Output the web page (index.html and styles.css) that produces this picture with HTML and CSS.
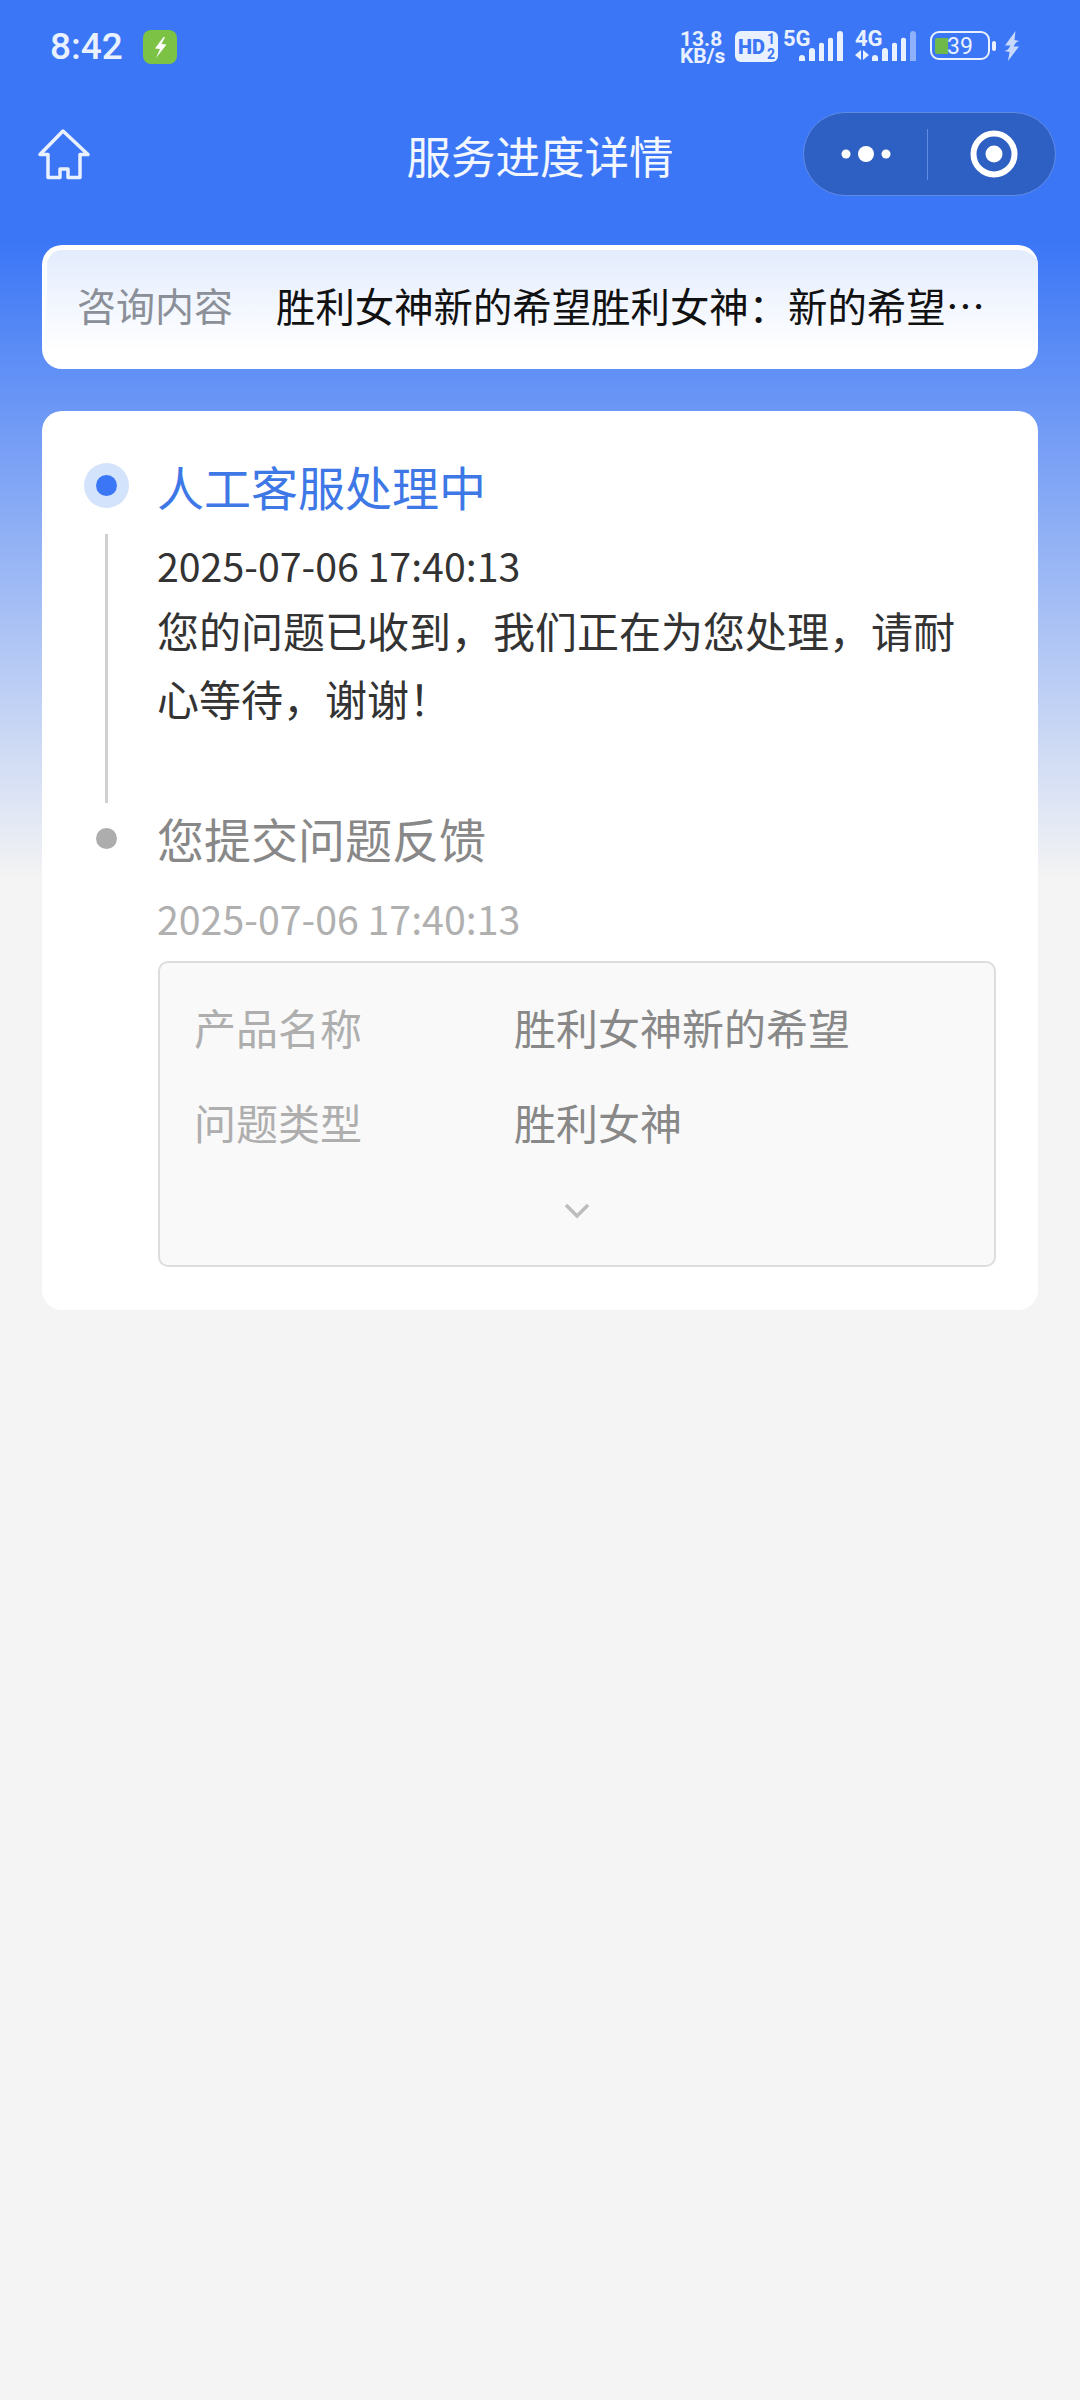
FILE: index.html
```html
<!DOCTYPE html>
<html lang="zh-CN">
<head>
    <meta charset="UTF-8">
    <meta name="viewport" content="width=device-width, initial-scale=1.0">
    <title>服务进度详情</title>
    <link rel="stylesheet" href="styles.css">
</head>
<body>
    <div class="status-bar">
        <div class="status-left">
            <span class="clock">8:42</span>
            <span class="app-badge">
                <svg width="34" height="34" viewBox="0 0 34 34"><path d="M20.500 7L12 18.500l5 .5-4 9 10.500-13.500-5-.5 3.500-7z" fill="#fff"/></svg>
            </span>
        </div>
        <div class="status-right">
            <div class="speed"><div>13.8</div><div>KB/s</div></div>
            <div class="hd">
                <span class="hd-text">HD</span>
                <div class="hd-nums"><div>1</div><div>2</div></div>
            </div>
            <div class="net net-5g">
                <span class="net-text">5G</span>
                <svg width="60" height="31" viewBox="0 0 60 31">
                    <path d="M16 27a3 3 0 0 1 6 0v3h-6zM26 20a3 3 0 0 1 6 0v10h-6zM36 13a3 3 0 0 1 5 0v17h-5zM45 8a3 3 0 0 1 5 0v22h-5zM54 3a3 3 0 0 1 6 0v27h-6z" fill="#e9f0fe"/>
                </svg>
            </div>
            <div class="net net-4g">
                <span class="net-text">4G</span>
                <svg width="62" height="31" viewBox="0 0 62 31">
                    <path d="M7 19v10l-6-5zM9 19l6 5-6 5zM18 27a3 3 0 0 1 6 0v3h-6zM28 20a3 3 0 0 1 6 0v10h-6zM38 13a3 3 0 0 1 5 0v17h-5zM47 8a3 3 0 0 1 5 0v22h-5z" fill="#e9f0fe"/>
                    <path d="M56 3a3 3 0 0 1 6 0v27h-6z" fill="#8fb0fa"/>
                </svg>
            </div>
            <div class="battery">
                <span class="battery-fill"></span>
                <span class="battery-num">39</span>
            </div>
            <span class="battery-nub"></span>
            <svg class="charge" width="16" height="31" viewBox="0 0 16 31"><path d="M11.500 0L1 14.500h5.500L4 18.500.5 20l5 1L4 30l11-14.500H9.500l2.500-4 3-1.500-4.500-1z" fill="#c9d9fc"/></svg>
        </div>
    </div>

    <div class="nav-bar">
        <svg class="home" width="54" height="52" viewBox="0 0 54 52">
            <path d="M2 26.500L25 3l25 23.500H42v23H30V41h-8v8.500H10v-23z" fill="none" stroke="#e9f0fe" stroke-width="3.500" stroke-linejoin="round"/>
        </svg>
        <div class="nav-title">服务进度详情</div>
        <div class="capsule">
            <div class="capsule-part">
                <svg width="60" height="20" viewBox="0 0 60 20"><circle cx="10" cy="10" r="4.500" fill="#fff"/><circle cx="30" cy="10" r="8" fill="#fff"/><circle cx="50" cy="10" r="4.500" fill="#fff"/></svg>
            </div>
            <div class="capsule-line"></div>
            <div class="capsule-part capsule-right">
                <svg width="48" height="48" viewBox="0 0 48 48"><circle cx="24" cy="24" r="20.500" fill="none" stroke="#fff" stroke-width="6"/><circle cx="24" cy="24" r="8.500" fill="#fff"/></svg>
            </div>
        </div>
    </div>

    <div class="content">
        <div class="ask-card">
            <span class="ask-label">咨询内容</span>
            <span class="ask-value">胜利女神新的希望胜利女神：新的希望胜利女神新的希望</span>
        </div>

        <div class="progress-card">
            <div class="step step-now">
                <div class="step-side">
                    <span class="dot-now"></span>
                    <span class="step-line"></span>
                </div>
                <div class="step-main">
                    <div class="step-title">人工客服处理中</div>
                    <div class="step-time">2025-07-06 17:40:13</div>
                    <div class="step-text">您的问题已收到，我们正在为您处理，请耐心等待，谢谢！</div>
                </div>
            </div>

            <div class="step step-old">
                <div class="step-side">
                    <span class="dot-old"></span>
                </div>
                <div class="step-main">
                    <div class="step-title">您提交问题反馈</div>
                    <div class="step-time">2025-07-06 17:40:13</div>
                    <div class="detail-box">
                        <div class="detail-row"><span class="detail-label">产品名称</span><span>胜利女神新的希望</span></div>
                        <div class="detail-row"><span class="detail-label">问题类型</span><span>胜利女神</span></div>
                        <div class="detail-more">
                            <svg width="26" height="16" viewBox="0 0 26 16"><path d="M2 2l11 11L24 2" fill="none" stroke="#bdbdbd" stroke-width="3.500"/></svg>
                        </div>
                    </div>
                </div>
            </div>
        </div>
    </div>
</body>
</html>
```

FILE: styles.css
```css
* {
    box-sizing: border-box;
}
body {
    margin: 0;
    width: 1080px;
    height: 2400px;
    overflow: hidden;
    font-family: "Noto Sans CJK SC", "Noto Sans", sans-serif;
    background: linear-gradient(#3b76f6 0, #3b76f6 240px, #f4f4f4 880px);
}
.status-bar {
    height: 112px;
    padding: 30px 60px 0 50px;
    display: flex;
    justify-content: space-between;
    align-items: flex-start;
}
.status-left {
    display: flex;
    align-items: center;
    gap: 20px;
}
.clock {
    font-family: Roboto, sans-serif;
    font-size: 37px;
    line-height: 34px;
    font-weight: 500;
    color: #e9f0fe;
}
.app-badge {
    width: 34px;
    height: 34px;
    border-radius: 8px;
    background: #7cc245;
    display: flex;
}
.status-right {
    display: flex;
    align-items: flex-start;
    color: #e9f0fe;
    padding-top: 1px;
    font-family: Roboto, sans-serif;
}
.speed {
    width: 55px;
    font-size: 21px;
    line-height: 17px;
    font-weight: 700;
}
.hd {
    width: 43px;
    height: 31px;
    margin-right: 5px;
    padding-left: 3px;
    border-radius: 6px;
    background: #e9f0fe;
    color: #3b76f6;
    display: flex;
    align-items: center;
    font-size: 20px;
    font-weight: 900;
    line-height: 20px;
}
.hd-nums {
    font-size: 14px;
    font-weight: 700;
    line-height: 15px;
    margin-left: 2px;
}
.net {
    display: flex;
    flex-direction: column;
    position: relative;
    height: 31px;
}
.net-text {
    position: absolute;
    top: -3px;
    font-size: 22px;
    line-height: 21px;
    font-weight: 700;
}
.net-5g {
    margin-right: 11px;
}
.net-4g {
    margin-right: 14px;
}
.net-4g .net-text {
    left: 1px;
}
.battery {
    width: 60px;
    height: 29px;
    border: 2.500px solid #e9f0fe;
    border-radius: 9px;
    padding: 5px 0 0 3px;
    display: flex;
}
.battery-fill {
    width: 13px;
    height: 16px;
    border-radius: 2px 0 0 2px;
    background: #6fb84a;
}
.battery-num {
    font-size: 23px;
    line-height: 18px;
    margin-left: -1px;
}
.battery-nub {
    width: 4px;
    height: 10px;
    margin: 10px 8px 0 2px;
    border-radius: 2px;
    background: #e9f0fe;
}
.nav-bar {
    height: 84px;
    padding: 0 24px 0 38px;
    display: flex;
    align-items: center;
    justify-content: space-between;
    position: relative;
}
.nav-title {
    position: absolute;
    left: 0;
    right: 0;
    text-align: center;
    font-size: 44.500px;
    line-height: 83px;
    color: #f2f6ff;
}
.capsule {
    width: 253px;
    height: 84px;
    border-radius: 42px;
    background: #2e5fc2;
    border: 1px solid #5f8be6;
    display: flex;
    align-items: center;
}
.capsule-part {
    flex: 1;
    display: flex;
    align-items: center;
    justify-content: center;
}
.capsule-right {
    padding-left: 4px;
}
.capsule-line {
    width: 1px;
    height: 51px;
    background: #5f8be6;
}
.content {
    padding: 49px 42px 0;
}
.ask-card {
    height: 124px;
    border-radius: 20px;
    border: 5px solid #fff;
    border-bottom: 0;
    border-right: 0;
    background: linear-gradient(#e3ecfd, #fff 85%);
    padding: 0 32px 11px 30px;
    display: flex;
    align-items: center;
    font-size: 39px;
}
.ask-label {
    color: #8a8f98;
    flex: none;
    width: 199px;
}
.ask-value {
    color: #111;
    font-size: 39.400px;
    white-space: nowrap;
    overflow: hidden;
    text-overflow: ellipsis;
}
.progress-card {
    margin-top: 42px;
    height: 899px;
    border-radius: 20px;
    background: #fff;
    padding: 52px 42px 0 42px;
}
.step {
    display: flex;
}
.step-side {
    width: 73px;
    flex: none;
    display: flex;
    flex-direction: column;
    align-items: center;
    padding-right: 28px;
}
.dot-now {
    width: 45px;
    height: 45px;
    border-radius: 50%;
    background: #d2e3fb;
    display: flex;
    align-items: center;
    justify-content: center;
    flex: none;
}
.dot-now::after {
    content: "";
    width: 21px;
    height: 21px;
    border-radius: 50%;
    background: #3b76f6;
}
.step-line {
    width: 3px;
    height: 269px;
    margin-top: 26px;
    background: #d0d0d0;
}
.dot-old {
    width: 21px;
    height: 21px;
    margin-top: 25px;
    border-radius: 50%;
    background: #adadad;
}
.step-main {
    flex: 1;
}
.step-title {
    font-size: 47px;
    line-height: 46px;
}
.step-now .step-title {
    color: #3e78e6;
}
.step-old .step-title {
    color: #888;
    line-height: 70px;
}
.step-time {
    font-size: 39.300px;
    line-height: 63px;
    margin-top: 24px;
}
.step-now .step-time {
    color: #333;
}
.step-old .step-time {
    color: #b0b0b0;
    line-height: 60px;
    margin-top: 15px;
}
.step-text {
    font-size: 42px;
    line-height: 68px;
    color: #333;
}
.detail-box {
    margin: 13px 0 0 1px;
    width: 838px;
    height: 306px;
    background: #f9f9f9;
    border: 2px solid #ddd;
    border-radius: 10px;
    padding: 19px 34px 0;
    font-size: 42px;
    color: #888;
}
.detail-row {
    display: flex;
    height: 95px;
    line-height: 90px;
}
.detail-label {
    width: 320px;
    color: #aeaeae;
}
.detail-more {
    display: flex;
    justify-content: center;
    padding-top: 31px;
}
```
